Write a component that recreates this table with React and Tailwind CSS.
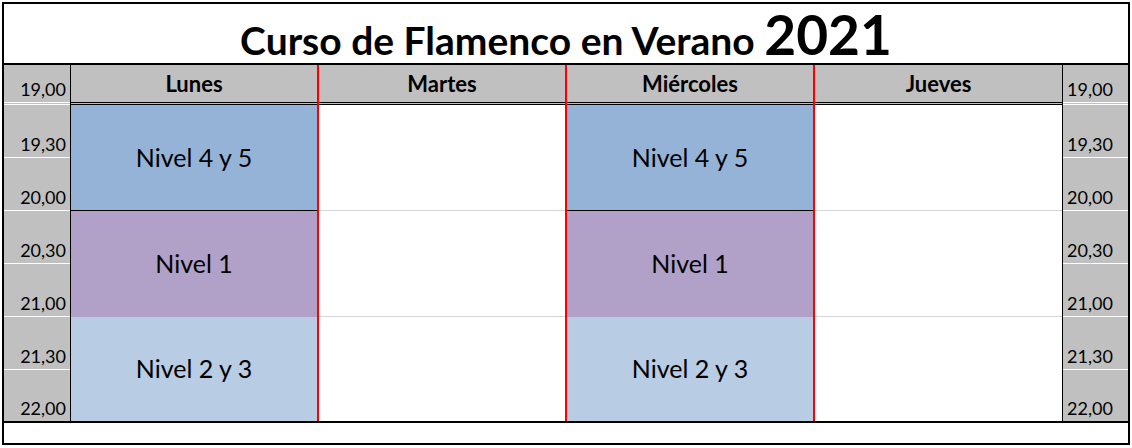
const times = ['19,00', '19,30', '20,00', '20,30', '21,00', '21,30', '22,00'];
const days = ['Lunes', 'Martes', 'Miércoles', 'Jueves'];

// each day column: three merged blocks of two rows
const blocks = {
  Lunes: [
    { label: 'Nivel 4 y 5', bg: 'bg-[#95b3d7]', line: 'border-b border-black' },
    { label: 'Nivel 1', bg: 'bg-[#b1a0c7]', line: '' },
    { label: 'Nivel 2 y 3', bg: 'bg-[#b8cce4]', line: '' },
  ],
  Martes: [
    { label: '', bg: 'bg-white', line: 'border-b border-[#d4d4d4]' },
    { label: '', bg: 'bg-white', line: 'border-b border-[#d4d4d4]' },
    { label: '', bg: 'bg-white', line: '' },
  ],
  Miércoles: [
    { label: 'Nivel 4 y 5', bg: 'bg-[#95b3d7]', line: 'border-b border-black' },
    { label: 'Nivel 1', bg: 'bg-[#b1a0c7]', line: '' },
    { label: 'Nivel 2 y 3', bg: 'bg-[#b8cce4]', line: '' },
  ],
  Jueves: [
    { label: '', bg: 'bg-white', line: 'border-b border-[#d4d4d4]' },
    { label: '', bg: 'bg-white', line: 'border-b border-[#d4d4d4]' },
    { label: '', bg: 'bg-white', line: '' },
  ],
};

function TimeColumn({ side }) {
  const left = side === 'left';
  return (
    <div className={`flex flex-col bg-[#c0c0c0] ${left ? 'border-r border-black' : ''}`}>
      {times.map((t, i) => (
        <div
          key={t}
          className={`flex items-end px-1 text-[18px] leading-none ${
            left ? 'justify-end' : 'justify-start'
          } ${
            i === 0
              ? 'h-[40px] border-b-[3px] border-double border-white pb-[4px]'
              : i === times.length - 1
              ? 'h-[51px] pb-[4px]'
              : 'h-[53px] border-b border-white pb-[4px]'
          }`}
        >
          {t}
        </div>
      ))}
    </div>
  );
}

function DayColumn({ day, last }) {
  return (
    <div className={`flex flex-col ${last ? 'border-r border-black' : 'border-r-2 border-[#ff0000]'}`}>
      <div className="flex h-[40px] items-center justify-center border-b-[3px] border-double border-black bg-[#c0c0c0] text-[22px] font-bold leading-none">
        {day}
      </div>
      {blocks[day].map((b, i) => (
        <div
          key={i}
          className={`flex items-center justify-center text-[25px] ${b.bg} ${b.line} ${
            i === 2 ? 'h-[104px]' : 'h-[106px]'
          }`}
        >
          {b.label}
        </div>
      ))}
    </div>
  );
}

export default function App() {
  return (
    <div className="h-[448px] w-[1132px] bg-white p-[2px] text-black" style={{ fontFamily: 'Lato, "Open Sans", sans-serif' }}>
      <div className="flex h-[443px] w-[1128px] flex-col border-2 border-black">
        {/* title */}
        <div className="flex h-[61px] items-end justify-center border-b-2 border-black pb-[1px]">
          <div className="flex items-baseline font-bold leading-none">
            <span className="text-[39px]">Curso de Flamenco en Verano&nbsp;</span>
            <span className="text-[55px]">2021</span>
          </div>
        </div>

        {/* timetable */}
        <div className="grid grid-cols-[67px_248px_248px_248px_248px_65px] border-b-2 border-black">
          <TimeColumn side="left" />
          {days.map((d, i) => (
            <DayColumn key={d} day={d} last={i === days.length - 1} />
          ))}
          <TimeColumn side="right" />
        </div>

        {/* empty bottom row */}
        <div className="flex-1" />
      </div>
    </div>
  );
}
